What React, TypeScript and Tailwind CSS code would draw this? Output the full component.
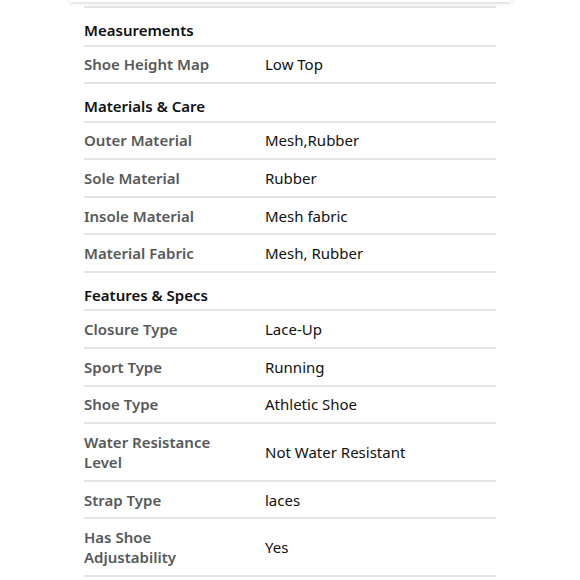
import React from "react";

type Row = { label: string; value?: string; heading?: boolean };

const rows: Row[] = [
  { label: "Measurements", heading: true },
  { label: "Shoe Height Map", value: "Low Top" },
  { label: "Materials & Care", heading: true },
  { label: "Outer Material", value: "Mesh,Rubber" },
  { label: "Sole Material", value: "Rubber" },
  { label: "Insole Material", value: "Mesh fabric" },
  { label: "Material Fabric", value: "Mesh, Rubber" },
  { label: "Features & Specs", heading: true },
  { label: "Closure Type", value: "Lace-Up" },
  { label: "Sport Type", value: "Running" },
  { label: "Shoe Type", value: "Athletic Shoe" },
  { label: "Water Resistance Level", value: "Not Water Resistant" },
  { label: "Strap Type", value: "laces" },
  { label: "Has Shoe Adjustability", value: "Yes" },
];

export default function App() {
  return (
    <div
      className="min-h-[580px] bg-white overflow-hidden"
      style={{ fontFamily: '"Noto Sans", "Open Sans", sans-serif' }}
    >
      {/* bottom edge of the card above */}
      <div className="mx-auto w-[441px] h-[10px] -mt-[8px] bg-white shadow-[0_1px_4px_rgba(0,0,0,0.18)]" />

      <div className="mx-auto w-[412px] mt-[4px]">
        {rows.map((r, i) =>
          r.heading ? (
            <div
              key={i}
              className="border-t-2 border-[#e4e4e4] pt-[12px] pb-[4.5px] text-[15px] leading-[20px] font-semibold text-[#0f1111]"
            >
              {r.label}
            </div>
          ) : (
            <div
              key={i}
              className={
                "flex items-center border-t-2 border-[#e4e4e4] py-[7.8px] text-[15px] leading-[20px]" +
                (i === rows.length - 1 ? " border-b-2" : "")
              }
            >
              <div className="w-[181px] shrink-0 pr-[34px] font-semibold text-[#565959]">
                {r.label}
              </div>
              <div className="text-[#0f1111]">{r.value}</div>
            </div>
          )
        )}
      </div>
    </div>
  );
}
